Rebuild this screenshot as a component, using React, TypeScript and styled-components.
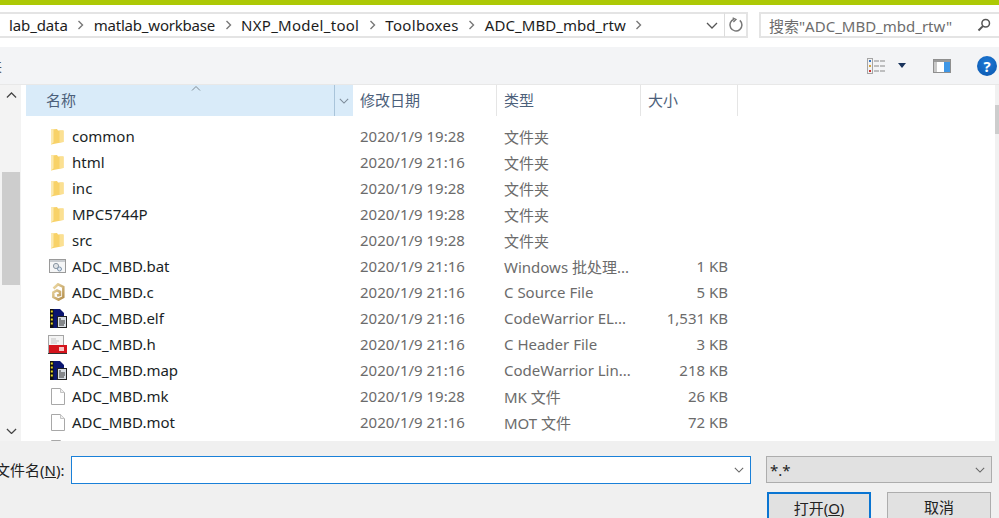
import React from "react";
import styled, { createGlobalStyle } from "styled-components";

const Global = createGlobalStyle`
  html, body { margin: 0; padding: 0; width: 999px; height: 518px; overflow: hidden; background: #fff; }
  * { box-sizing: border-box; }
`;

const FONT = `"Noto Sans", "Noto Sans CJK SC", sans-serif`;

const Page = styled.div`
  width: 999px; height: 518px; display: flex; flex-direction: column; overflow: hidden;
  font-family: ${FONT}; font-size: 15px; color: #1c1c1c; background: #fff;
`;
const TopStripe = styled.div`height: 5px; background: #adc906; flex: none;`;
const NavBar = styled.div`height: 42px; flex: none; padding: 7px 0 0; display: flex; align-items: flex-start; background: #fff;`;
const Address = styled.div`
  width: 724px; height: 26px; border: 2px solid #e4e4e4; border-left: 0; border-right: 0; display: flex; align-items: center;
  padding-left: 9px; overflow: hidden; white-space: nowrap;
`;
const Crumb = styled.span<{ $ls: number }>`line-height: 22px; letter-spacing: ${p => p.$ls}px;`;
const CrumbSep = styled.svg`width: 7px; height: 10px; margin: 0 9.5px; flex: none;`;
const AddressFill = styled.div`flex: 1; display: flex; justify-content: flex-end; padding-right: 6px; align-items: center;`;
const RefreshBox = styled.div`
  width: 24px; height: 26px; border: 2px solid #e4e4e4; border-left: 1px solid #dcdcdc; display: flex; align-items: center; justify-content: center;
`;
const Search = styled.div`
  margin-left: 11px; width: 240px; height: 26px; border: 2px solid #e4e4e4; border-right: 0; display: flex; align-items: center; justify-content: space-between;
  padding: 0 8px; color: #6d6d6d; white-space: nowrap;
`;
const Toolbar = styled.div`
  height: 38px; flex: none; background: #f3f4f6; border-bottom: 1px solid #e8e8e8; display: flex; align-items: center; justify-content: flex-end; padding-right: 2px;
`;
const ToolCut = styled.span`margin-right: auto; margin-left: -11px; font-size: 13px; color: #555;`;
const ViewIcon = styled.svg`width: 18px; height: 16px; margin-right: 13px;`;
const ViewCaret = styled.svg`width: 8px; height: 5px; margin-right: 27px;`;
const PaneIcon = styled.svg`width: 18px; height: 14px; margin-right: 26px;`;
const HelpBadge = styled.div`
  width: 20px; height: 20px; border-radius: 50%; background: radial-gradient(circle at 50% 35%, #1e7ad6, #0a55ad);
  color: #fff; font-weight: 700; font-size: 15px; line-height: 20px; text-align: center;
`;
const Body = styled.div`flex: 1; min-height: 0; display: flex; background: #fff; overflow: hidden;`;
const NavScroll = styled.div`
  width: 21px; flex: none; background: #f3f3f3; display: flex; flex-direction: column; padding: 0 0 0 2px;
`;
const ScrollButton = styled.div<{ $h: number }>`height: ${p => p.$h}px; flex: none; display: flex; align-items: center; justify-content: center;`;
const Thumb = styled.div`width: 18px; height: 113px; background: #cdcdcd; flex: none;`;
const NavGrow = styled.div`flex: 1;`;
const ListPane = styled.div`flex: 1; margin-left: 5px; min-width: 0; display: flex; flex-direction: column; position: relative;`;
const Header = styled.div`height: 31px; flex: none; display: flex; color: #4c607a;`;
const HeadName = styled.div`width: 327px; display: flex; background: #d9ebf9; position: relative;`;
const HeadNameText = styled.div`width: 309px; padding: 0 0 0 20px; line-height: 31px; border-right: 1px solid #a9c4da;`;
const HeadChevron = styled.div`flex: 1; display: flex; align-items: center; justify-content: center;`;
const SortMark = styled.svg`position: absolute; left: 165px; top: 0; width: 10px; height: 6px;`;
const HeadCell = styled.div<{ $w: number }>`
  width: ${p => p.$w}px; padding-left: 7px; line-height: 31px; border-right: 1px solid #e5e5e5;
`;
const Rows = styled.div`padding-top: 7px; flex: 1; overflow: hidden;`;
const Row = styled.div`height: 26px; display: flex; align-items: center; white-space: nowrap;`;
const NameCell = styled.div`width: 327px; display: flex; align-items: center; padding-left: 21px; color: #1a1f26;`;
const IconSlot = styled.div`width: 25px; height: 22px; display: flex; align-items: center; flex: none;`;
const DateCell = styled.div`width: 144px; padding-left: 7px; color: #6b6b6b;`;
const TypeCell = styled.div`width: 144px; padding-left: 7px; color: #6b6b6b;`;
const SizeCell = styled.div`width: 87px; text-align: right; color: #6b6b6b;`;
const PageTrack = styled.div`position: absolute; right: 0; top: 0; bottom: 0; width: 4px; background: #f1f1f1;`;
const PageThumb = styled.div`margin-top: 20px; height: 29px; background: #cdcdcd;`;
const Footer = styled.div`
  height: 77px; flex: none; background: #f0f0f0; display: grid; grid-template-columns: 71px 680px 226px; padding-top: 15px;
`;
const FieldLabel = styled.div`height: 28px; line-height: 28px; white-space: nowrap; margin-left: -5px; color: #222;`;
const Under = styled.span`text-decoration: underline;`;
const NameInput = styled.div`
  height: 28px; background: #fff; border: 1px solid #1a80d8; display: flex; align-items: center; justify-content: flex-end; padding-right: 6px;
`;
const RightCol = styled.div`margin-left: 15px; display: flex; flex-direction: column; width: 226px;`;
const TypeSelect = styled.div`
  height: 27px; background: #e1e1e1; border: 1px solid #adadad; display: flex; align-items: center; justify-content: space-between; padding: 0 6px 0 3px; color: #222;
`;
const Buttons = styled.div`display: flex; margin-top: 9px; padding-left: 1px; gap: 16px;`;
const DialogButton = styled.div<{ $primary?: boolean }>`
  width: 104px; height: 34px; background: #e1e1e1; border: ${p => (p.$primary ? "2px solid #0a75d2" : "1px solid #adadad")};
  text-align: center; line-height: 28px; color: #222;
`;

const Folder = () => (
  <svg width="13" height="17" viewBox="0 0 13 17" aria-hidden style={{ marginLeft: 4 }}>
    <path d="M0 1.5 L6 1 L7 2.5 L12.5 2.5 L12.5 14 L0 16.5 Z" fill="#f8d268" />
    <path d="M0 1.5 L2.5 1.3 L2.5 14.5 L0 16.5 Z" fill="#fce9ae" />
    <path d="M8.5 2.5 L12.5 2.5 L12.5 14 L8.5 14 Z" fill="#fbe092" />
  </svg>
);
const Bat = () => (
  <svg width="17" height="14" viewBox="0 0 17 14" aria-hidden style={{ marginLeft: 2 }}>
    <rect x=".5" y=".5" width="16" height="13" fill="#f5f6f7" stroke="#9a9a9a" />
    <rect x="1" y="1" width="15" height="2" fill="#c8ccd0" />
    <circle cx="7" cy="7" r="2.6" fill="#dfe3e7" stroke="#8b97a3" />
    <circle cx="10.5" cy="10" r="2" fill="#dfe8f2" stroke="#7f95ad" />
  </svg>
);
const CFile = () => (
  <svg width="13" height="18" viewBox="0 0 13 18" aria-hidden style={{ marginLeft: 5 }}>
    <defs>
      <linearGradient id="cgold" x1="0" y1="0" x2="1" y2="1">
        <stop offset="0" stopColor="#efdca8" />
        <stop offset="1" stopColor="#b48f4e" />
      </linearGradient>
    </defs>
    <path d="M1.5 5.5 L6 1.3 L11.3 4 L11.3 14 L6.5 16.7 L1.3 14 L1.3 9.5 L5 7.5 L8 8.8 L8 12 L5 12.6" fill="none" stroke="url(#cgold)" strokeWidth="2.5" />
  </svg>
);
const Elf = () => (
  <svg width="17" height="19" viewBox="0 0 17 19" aria-hidden style={{ marginLeft: 3 }}>
    <path d="M0 0 H10 L14 4 V19 H0 Z" fill="#0b1670" />
    <rect x="0" y="0" width="3.5" height="19" fill="#111" />
    <path d="M.8 1.5h2v2h-2zM.8 5.5h2v2h-2zM.8 9.5h2v2h-2zM.8 13.5h2v2h-2z" fill="#e8d820" />
    <rect x="7.5" y="7.5" width="9" height="11" fill="#d8dde3" stroke="#222" strokeWidth="1" />
    <path d="M9 10h2M9 12h6M9 14h6M9 16h5" stroke="#333" strokeWidth="1" />
  </svg>
);
const HeaderFile = () => (
  <svg width="19" height="19" viewBox="0 0 19 19" aria-hidden style={{ marginLeft: 1 }}>
    <rect x=".5" y=".5" width="15" height="17" fill="#f4f4f4" stroke="#a5a5a5" />
    <path d="M3 4h5M3 6h8M3 8h6" stroke="#c3c3c3" strokeWidth="1" />
    <rect x="1" y="10" width="18" height="8" fill="#d4141c" />
    <rect x="11" y="12" width="5" height="4" fill="#f7c4c4" />
    <rect x="0" y="18" width="19" height="1" fill="#333" />
  </svg>
);
const Plain = () => (
  <svg width="14" height="17" viewBox="0 0 14 17" aria-hidden style={{ marginLeft: 4 }}>
    <path d="M.5 .5 H9.5 L13.5 4.5 V16.5 H.5 Z" fill="#fff" stroke="#a8a8a8" />
    <path d="M9.5 .5 V4.5 H13.5" fill="#eee" stroke="#c4c4c4" />
  </svg>
);
const Chevron = ({ up, color = "#555", w = 12 }: { up?: boolean; color?: string; w?: number }) => (
  <svg width={w} height={w / 2 + 1} viewBox="0 0 12 7" aria-hidden>
    <path d={up ? "M1 6 L6 1 L11 6" : "M1 1 L6 6 L11 1"} fill="none" stroke={color} strokeWidth="1.3" />
  </svg>
);

const files: { n: string; i: React.ReactNode; d: string; t: string; s?: string }[] = [
  { n: "common", i: <Folder />, d: "2020/1/9 19:28", t: "文件夹" },
  { n: "html", i: <Folder />, d: "2020/1/9 21:16", t: "文件夹" },
  { n: "inc", i: <Folder />, d: "2020/1/9 19:28", t: "文件夹" },
  { n: "MPC5744P", i: <Folder />, d: "2020/1/9 19:28", t: "文件夹" },
  { n: "src", i: <Folder />, d: "2020/1/9 19:28", t: "文件夹" },
  { n: "ADC_MBD.bat", i: <Bat />, d: "2020/1/9 21:16", t: "Windows 批处理...", s: "1 KB" },
  { n: "ADC_MBD.c", i: <CFile />, d: "2020/1/9 21:16", t: "C Source File", s: "5 KB" },
  { n: "ADC_MBD.elf", i: <Elf />, d: "2020/1/9 21:16", t: "CodeWarrior EL...", s: "1,531 KB" },
  { n: "ADC_MBD.h", i: <HeaderFile />, d: "2020/1/9 21:16", t: "C Header File", s: "3 KB" },
  { n: "ADC_MBD.map", i: <Elf />, d: "2020/1/9 21:16", t: "CodeWarrior Lin...", s: "218 KB" },
  { n: "ADC_MBD.mk", i: <Plain />, d: "2020/1/9 19:28", t: "MK 文件", s: "26 KB" },
  { n: "ADC_MBD.mot", i: <Plain />, d: "2020/1/9 21:16", t: "MOT 文件", s: "72 KB" },
  { n: "", i: <Plain />, d: "", t: "" },
];
const crumbs = [
  { t: "lab_data", ls: -0.12 },
  { t: "matlab_workbase", ls: -0.2 },
  { t: "NXP_Model_tool", ls: 0.28 },
  { t: "Toolboxes", ls: 0.33 },
  { t: "ADC_MBD_mbd_rtw", ls: 0.06 },
];

export default function App() {
  return (
    <Page>
      <Global />
      <TopStripe />
      <NavBar>
        <Address>
          {crumbs.map(c => (
            <React.Fragment key={c.t}>
              <Crumb $ls={c.ls}>{c.t}</Crumb>
              <CrumbSep viewBox="0 0 7 10"><path d="M1.5 1 L5.5 5 L1.5 9" fill="none" stroke="#777" strokeWidth="1.4" /></CrumbSep>
            </React.Fragment>
          ))}
          <AddressFill><Chevron color="#555" /></AddressFill>
        </Address>
        <RefreshBox>
          <svg width="16" height="16" viewBox="0 0 16 16" aria-hidden>
            <path d="M11.8 3.4 A6 6 0 1 1 6 2.3" fill="none" stroke="#777" strokeWidth="1.5" />
            <path d="M4.6 .8 L8 2.4 L5.4 5" fill="none" stroke="#777" strokeWidth="1.3" />
          </svg>
        </RefreshBox>
        <Search>
          <span>搜索"ADC_MBD_mbd_rtw"</span>
          <svg width="14" height="14" viewBox="0 0 14 14" aria-hidden>
            <circle cx="8.7" cy="5.3" r="3.8" fill="none" stroke="#555" strokeWidth="1.5" />
            <path d="M5.9 8.1 L1.5 12.5" stroke="#555" strokeWidth="2" />
          </svg>
        </Search>
      </NavBar>
      <Toolbar>
        <ToolCut>夹</ToolCut>
        <ViewIcon viewBox="0 0 18 16" aria-hidden>
          <rect x=".5" y=".5" width="5" height="15" fill="#f2f2f2" stroke="#a5a5a5" />
          <rect x="2" y="2" width="2" height="2" fill="#3877c4" />
          <rect x="2" y="7" width="2" height="2" fill="#d6a23a" />
          <rect x="2" y="12" width="2" height="2" fill="#c33" />
          <path d="M7 3h5M13 3h5M7 8h5M13 8h5M7 13h5M13 13h5" stroke="#888" strokeWidth="1" />
        </ViewIcon>
        <ViewCaret viewBox="0 0 8 5" aria-hidden><path d="M0 0 H8 L4 5 Z" fill="#19335c" /></ViewCaret>
        <PaneIcon viewBox="0 0 18 14" aria-hidden>
          <rect x=".5" y=".5" width="17" height="13" fill="#fff" stroke="#8f8f8f" />
          <rect x="1" y="1" width="16" height="2" fill="#9a9a9a" />
          <rect x="1" y="3" width="3" height="10" fill="#c9c9c9" />
          <rect x="11" y="3" width="6" height="10" fill="#3f97e6" />
        </PaneIcon>
        <HelpBadge>?</HelpBadge>
      </Toolbar>
      <Body>
        <NavScroll>
          <ScrollButton $h={20}><Chevron up color="#444" w={11} /></ScrollButton>
          <ScrollButton $h={67} />
          <Thumb />
          <NavGrow />
          <ScrollButton $h={20}><Chevron color="#444" w={11} /></ScrollButton>
        </NavScroll>
        <ListPane>
          <Header>
            <HeadName>
              <HeadNameText>名称</HeadNameText>
              <HeadChevron><Chevron color="#7d8b99" w={10} /></HeadChevron>
              <SortMark viewBox="0 0 10 6" aria-hidden><path d="M1 5.5 L5 1.5 L9 5.5" fill="none" stroke="#7e8a94" strokeWidth="1" /></SortMark>
            </HeadName>
            <HeadCell $w={144}>修改日期</HeadCell>
            <HeadCell $w={144}>类型</HeadCell>
            <HeadCell $w={97}>大小</HeadCell>
          </Header>
          <Rows>
            {files.map((f, idx) => (
              <Row key={idx}>
                <NameCell><IconSlot>{f.i}</IconSlot>{f.n}</NameCell>
                <DateCell>{f.d}</DateCell>
                <TypeCell>{f.t}</TypeCell>
                <SizeCell>{f.s}</SizeCell>
              </Row>
            ))}
          </Rows>
          <PageTrack><PageThumb /></PageTrack>
        </ListPane>
      </Body>
      <Footer>
        <FieldLabel>文件名(<Under>N</Under>):</FieldLabel>
        <NameInput><Chevron color="#666" w={10} /></NameInput>
        <RightCol>
          <TypeSelect><span>*.*</span><Chevron color="#666" w={10} /></TypeSelect>
          <Buttons>
            <DialogButton $primary>打开(<Under>O</Under>)</DialogButton>
            <DialogButton>取消</DialogButton>
          </Buttons>
        </RightCol>
      </Footer>
    </Page>
  );
}
